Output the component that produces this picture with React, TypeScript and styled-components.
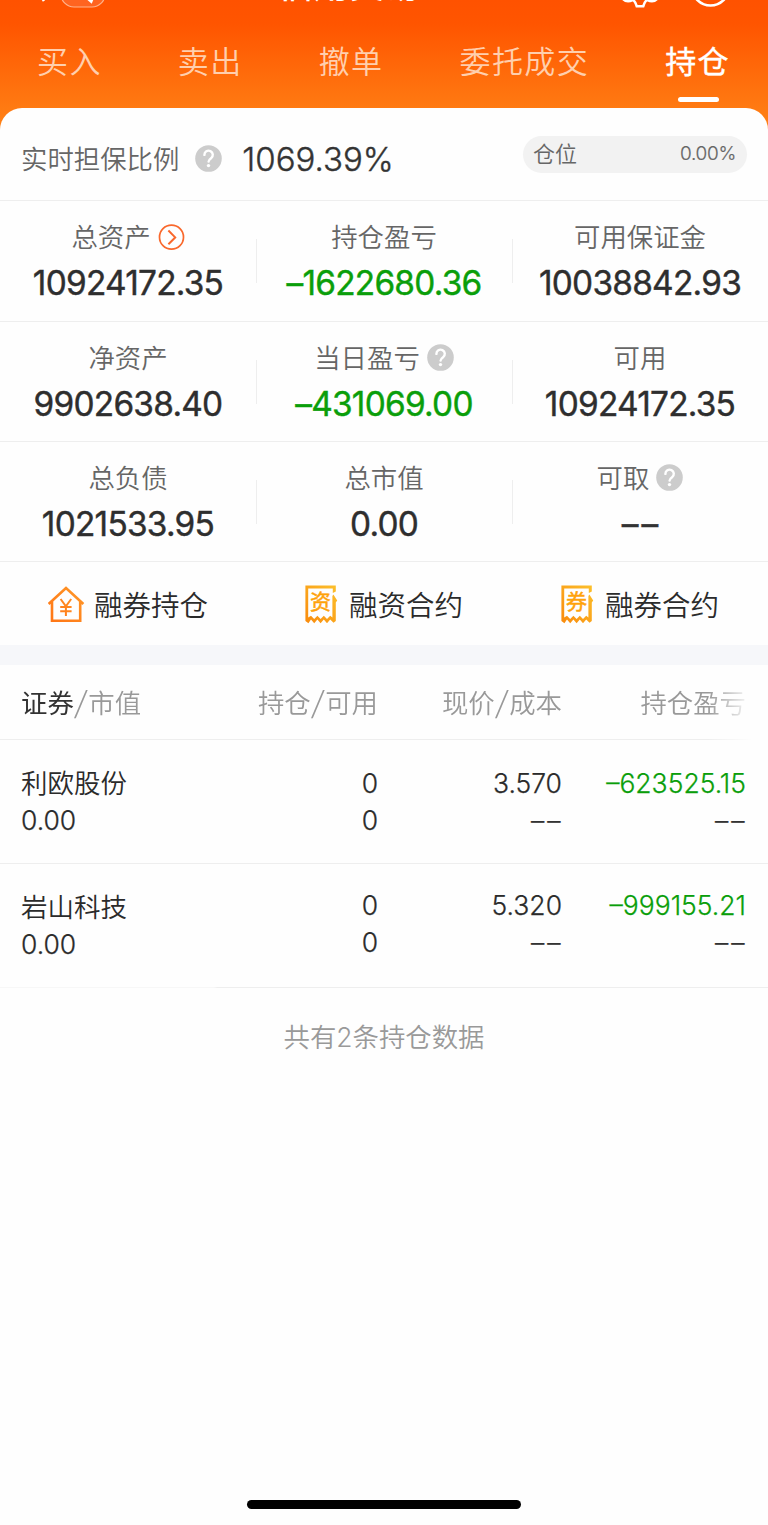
import React from 'react';
import styled, { createGlobalStyle } from 'styled-components';

const GlobalStyle = createGlobalStyle`
  * { box-sizing: border-box; }
  body {
    margin: 0;
    background: #fefefe;
    font-family: Inter, 'Noto Sans CJK SC', sans-serif;
    color: #333;
    -webkit-font-smoothing: antialiased;
  }
`;

const Screen = styled.div`
  width: 768px;
  height: 1525px;
  display: flex;
  flex-direction: column;
  overflow: hidden;
  background: #fefefe;
`;

const Header = styled.header`
  height: 130px;
  flex: none;
  background: linear-gradient(180deg, #ff5200 0, #ff5500 24px, #ff7a12 108px, #ff8316 130px);
`;

const TitleBar = styled.div`
  height: 20px;
  overflow: hidden;
  display: flex;
  align-items: flex-start;
`;

const BackIcon = styled.svg`
  width: 110px;
  height: 12px;
  flex: none;
`;

const Title = styled.h1`
  flex: none;
  width: 150px;
  margin: -34px 0 0 168px;
  font-size: 35.5px;
  line-height: 40px;
  font-weight: 500;
  color: #fff;
  white-space: nowrap;
`;

const ToolIcons = styled.svg`
  flex: none;
  width: 120px;
  height: 12px;
  margin-left: 187px;
`;

const Tabs = styled.nav`
  height: 88px;
  display: flex;
  justify-content: space-between;
  padding: 22px 38px 0 37px;
`;

const Tab = styled.div<{ $active?: boolean }>`
  display: flex;
  flex-direction: column;
  align-items: center;
  font-size: 31px;
  line-height: 40px;
  letter-spacing: 1.4px;
  font-weight: ${p => (p.$active ? 400 : 350)};
  color: ${p => (p.$active ? '#fff' : '#ffcfae')};
  -webkit-text-stroke: ${p => (p.$active ? '0.4px #fff' : '0')};
`;

const Underline = styled.i`
  width: 41px;
  height: 5px;
  margin: 15px 0 0 1px;
  border-radius: 3px;
  background: #fff;
`;

const Panel = styled.main`
  flex: 1;
  margin-top: -22px;
  display: flex;
  flex-direction: column;
  background: #fefefe;
  border-radius: 22px 22px 0 0;
`;

const RatioRow = styled.section`
  height: 93px;
  display: flex;
  align-items: center;
  padding: 10px 21px 0;
  border-bottom: 1px solid #eee;
`;

const Label = styled.span`
  font-size: 26.4px;
  line-height: 36px;
  font-weight: 350;
  color: #666;
  white-space: nowrap;
`;

const RatioValue = styled.span`
  margin-left: 20px;
  font-size: 33px;
  line-height: 40px;
  font-weight: 300;
  -webkit-text-stroke: 0.4px #333;
  letter-spacing: 0;
`;

const Pill = styled.div`
  width: 224px;
  height: 37px;
  margin: -10px 0 0 auto;
  padding: 0 11px 3px 10px;
  display: flex;
  align-items: center;
  justify-content: space-between;
  border-radius: 19px;
  background: #f2f2f2;
  font-size: 22px;
  font-weight: 350;
  color: #666;
`;

const PillLabel = styled.span`
  margin-top: -2px;
`;

const PillValue = styled.span`
  font-size: 19px;
  font-weight: 300;
  letter-spacing: -0.3px;
  margin-top: 1px;
  -webkit-text-stroke: 0.2px #666;
`;

const MetricRow = styled.section<{ $tall?: boolean }>`
  height: ${p => (p.$tall ? 121 : 120)}px;
  flex: none;
  display: grid;
  grid-template-columns: repeat(3, 256px);
  border-bottom: 1px solid #eee;
`;

const Metric = styled.div`
  display: flex;
  flex-direction: column;
  align-items: center;
  padding-top: 18px;
`;

const MetricHead = styled.div`
  height: 36px;
  display: flex;
  align-items: center;
  gap: 7px;
`;

const MetricValue = styled.div<{ $down?: boolean }>`
  margin-top: 8px;
  font-size: 33.4px;
  line-height: 40px;
  font-weight: 400;
  letter-spacing: -0.75px;
  color: ${p => (p.$down ? '#0a9e0a' : '#2e2e2e')};
  -webkit-text-stroke: 0.4px currentColor;
`;

const Divided = styled(Metric)`
  background: linear-gradient(#eee, #eee) 0 38px / 1px 44px no-repeat;
`;

const Links = styled.section`
  height: 83px;
  flex: none;
  display: grid;
  grid-template-columns: repeat(3, 256px);
`;

const LinkItem = styled.div<{ $gap: number }>`
  display: flex;
  align-items: center;
  justify-content: center;
  gap: ${p => p.$gap}px;
  padding-top: 1px;
  font-size: 28.5px;
  font-weight: 350;
  color: #2b2b2b;
`;

const LinkText = styled.span`
  margin-top: -2px;
`;

const Band = styled.div`
  height: 20px;
  flex: none;
  background: #f6f7fa;
`;

const TableHead = styled.div`
  height: 75px;
  flex: none;
  display: grid;
  grid-template-columns: 173px 184px 184px 184px;
  align-items: center;
  padding: 0 22px 2px 21px;
  font-size: 26.4px;
  font-weight: 350;
  color: #999;
  border-bottom: 1px solid #eee;
  mask-image: linear-gradient(90deg, #000 708px, transparent 752px);
`;

const Strong = styled.b`
  font-weight: 400;
  color: #333;
`;

const Slash = styled.span`
  display: inline-block;
  width: 14.5px;
  text-align: center;
  font-family: 'Noto Sans CJK SC', sans-serif;
  font-size: 29px;
  line-height: 30px;
  transform: skewX(-6deg);
`;

const Cell = styled.div<{ $right?: boolean; $down?: boolean; $raise?: number }>`
  display: flex;
  flex-direction: column;
  align-items: ${p => (p.$right ? 'flex-end' : 'flex-start')};
  margin-top: ${p => -(p.$raise ?? 0)}px;
  white-space: nowrap;
  color: ${p => (p.$down ? '#0a9e0a' : 'inherit')};
`;

const Num = styled.span`
  font-weight: 300;
  -webkit-text-stroke: 0.25px currentColor;
`;

const HeadCell = styled.div<{ $right?: boolean }>`
  text-align: ${p => (p.$right ? 'right' : 'left')};
  white-space: nowrap;
`;

const TableRow = styled.div<{ $last?: boolean }>`
  height: 124px;
  flex: none;
  display: grid;
  grid-template-columns: 173px 184px 184px 184px;
  padding: 25px 22px 0 21px;
  font-size: 26.5px;
  line-height: 37px;
  font-weight: 350;
  color: #2b2b2b;
  border-bottom: 1px solid #eee;
  border-image: ${p => (p.$last ? 'linear-gradient(90deg, #f7f7f7 214px, #eee 218px) 1' : 'none')};
`;

const Dashes = styled.span<{ $gap: number; $inset?: number }>`
  display: inline-block;
  color: #333;
  letter-spacing: ${p => p.$gap}px;
  margin-right: ${p => (p.$inset ?? 0) - p.$gap}px;
`;

const Summary = styled.p`
  margin: 29px 0 0;
  text-align: center;
  font-size: 26.4px;
  line-height: 40px;
  font-weight: 350;
  color: #999;
`;

const HomeBar = styled.div`
  width: 274px;
  height: 9px;
  margin: auto auto 16px;
  border-radius: 5px;
  background: #000;
`;

const HelpSvg = styled.svg<{ $gap?: number }>`
  width: 27px;
  height: 27px;
  flex: none;
  margin-top: -2px;
  margin-left: ${p => p.$gap ?? 0}px;
`;

const Help = ({ gap }: { gap?: number }) => (
  <HelpSvg viewBox="0 0 27 27" $gap={gap}>
    <circle cx="13.5" cy="13.5" r="13.3" fill="#ccc" />
    <path d="M9.4 9.9a4.2 4.2 0 1 1 6.7 3.3c-1.8 1.3-2.5 1.8-2.5 3.4" fill="none" stroke="#fff" strokeWidth="2.4" strokeLinecap="round" />
    <circle cx="13.5" cy="20.6" r="1.7" fill="#fff" />
  </HelpSvg>
);

const Arrow = () => (
  <svg width="27" height="27" viewBox="0 0 27 27" fill="none" stroke="#f9682c">
    <circle cx="13.5" cy="13.2" r="12" strokeWidth="1.7" />
    <path d="M10.4 6.5l6.8 6.9-6.8 6.9" strokeWidth="2" />
  </svg>
);

const House = () => (
  <svg width="37" height="37" viewBox="0 0 37 37" fill="none" stroke="url(#house)" strokeWidth="2.6">
    <defs>
      <linearGradient id="house" gradientUnits="userSpaceOnUse" x1="0" y1="37" x2="37" y2="0">
        <stop offset="0" stopColor="#ff7314" />
        <stop offset="1" stopColor="#ff9a2a" />
      </linearGradient>
    </defs>
    <path d="M0.6 18L18 2L35.4 18M4 15.5V34.8H32.2V15.5" />
    <path d="M12.6 13l5.3 7.4l5.3-7.4M17.9 20.4v9.6M12.2 20.9h11.4M12.2 25.3h11.4" strokeWidth="2" />
  </svg>
);

const TicketText = styled.text`
  font-size: 21px;
  font-weight: 400;
  fill: #ffa20a;
  stroke: #ffa20a;
  stroke-width: 0.5px;
`;

const Ticket = ({ mark }: { mark: string }) => (
  <svg width="33" height="39" viewBox="0 0 33 39" fill="none">
    <defs>
      <linearGradient id="ticket" x1="0" y1="1" x2="1" y2="0">
        <stop offset="0" stopColor="#f98a0c" />
        <stop offset="1" stopColor="#fcc12c" />
      </linearGradient>
    </defs>
    <path
      d="M0.4 0.6H30.8V6.4L27.8 8V3.4H3.2V32.6L6 30.8L9.2 34L12.4 30.8L15.6 34L18.8 30.8L22 34L25.2 30.8L27.4 32.6V11L28.4 9.6L32.2 15.4L30.8 17.6V36L28.5 37.8L25.2 34.6L22 38.3L18.8 34.6L15.6 38.3L12.4 34.6L9.2 38.3L6 34.6L3.4 38.3L0.4 36Z"
      fill="url(#ticket)"
    />
    <TicketText x="15.4" y="24.4" textAnchor="middle">{mark}</TicketText>
  </svg>
);

type MetricData = { label: string; value: string; down?: boolean; icon?: React.ReactNode };

const metrics: MetricData[][] = [
  [
    { label: '总资产', value: '10924172.35', icon: <Arrow /> },
    { label: '持仓盈亏', value: '–1622680.36', down: true },
    { label: '可用保证金', value: '10038842.93' },
  ],
  [
    { label: '净资产', value: '9902638.40' },
    { label: '当日盈亏', value: '–431069.00', down: true, icon: <Help /> },
    { label: '可用', value: '10924172.35' },
  ],
  [
    { label: '总负债', value: '1021533.95' },
    { label: '总市值', value: '0.00' },
    { label: '可取', value: '––', icon: <Help /> },
  ],
];

const holdings = [
  { name: '利欧股份', price: '3.570', pnl: '–623525.15', raise: 0.5 },
  { name: '岩山科技', price: '5.320', pnl: '–999155.21', raise: 2 },
];

export default function App() {
  return (
    <Screen>
      <GlobalStyle />
      <Header>
        <TitleBar>
          <BackIcon viewBox="0 0 110 12" fill="none">
            <path d="M41.5 -3L44 1" stroke="#fff" strokeWidth="2.6" />
            <path d="M61 -6a13 13 0 0 0 13 13h18a13 13 0 0 0 13-13" fill="#ff6420" stroke="#ffb38c" strokeWidth="1.2" />
            <path d="M86 -3l5.2 4.6 1.6-4" stroke="#fff" strokeWidth="2.6" />
          </BackIcon>
          <Title>信用交易</Title>
          <ToolIcons viewBox="0 0 120 12" fill="none" stroke="#fff" strokeWidth="2.6">
            <path d="M8 -1Q12 3 17.5 0Q20 0.5 21.8 6.3h6.4Q30 0.5 32.5 0Q38 3 42 -1" />
            <circle cx="95.5" cy="-13" r="18.5" />
          </ToolIcons>
        </TitleBar>
        <Tabs>
          <Tab>买入</Tab>
          <Tab>卖出</Tab>
          <Tab>撤单</Tab>
          <Tab>委托成交</Tab>
          <Tab $active>
            持仓
            <Underline />
          </Tab>
        </Tabs>
      </Header>
      <Panel>
        <RatioRow>
          <Label>实时担保比例</Label>
          <Help gap={16} />
          <RatioValue>1069.39%</RatioValue>
          <Pill>
            <PillLabel>仓位</PillLabel>
            <PillValue>0.00%</PillValue>
          </Pill>
        </RatioRow>
        {metrics.map((row, i) => (
          <MetricRow key={i} $tall={i === 0}>
            {row.map((m, j) => {
              const Box = j === 0 ? Metric : Divided;
              return (
                <Box key={m.label}>
                  <MetricHead>
                    <Label>{m.label}</Label>
                    {m.icon}
                  </MetricHead>
                  <MetricValue $down={m.down}>
                    {m.value === '––' ? <Dashes $gap={3}>––</Dashes> : m.value}
                  </MetricValue>
                </Box>
              );
            })}
          </MetricRow>
        ))}
        <Links>
          <LinkItem $gap={9}><House /><LinkText>融券持仓</LinkText></LinkItem>
          <LinkItem $gap={11}><Ticket mark="资" /><LinkText>融资合约</LinkText></LinkItem>
          <LinkItem $gap={11}><Ticket mark="券" /><LinkText>融券合约</LinkText></LinkItem>
        </Links>
        <Band />
        <TableHead>
          <HeadCell><Strong>证券</Strong><Slash>/</Slash>市值</HeadCell>
          <HeadCell $right>持仓<Slash>/</Slash>可用</HeadCell>
          <HeadCell $right>现价<Slash>/</Slash>成本</HeadCell>
          <HeadCell $right>持仓盈亏</HeadCell>
        </TableHead>
        {holdings.map((h, i) => (
          <TableRow key={h.name} $last={i === holdings.length - 1}>
            <Cell>{h.name}<Num>0.00</Num></Cell>
            <Cell $right $raise={h.raise}><Num>0</Num><Num>0</Num></Cell>
            <Cell $right $raise={h.raise}><Num>{h.price}</Num><Num><Dashes $gap={3} $inset={1.5}>––</Dashes></Num></Cell>
            <Cell $right $down $raise={h.raise}><Num>{h.pnl}</Num><Num><Dashes $gap={3} $inset={1.5}>––</Dashes></Num></Cell>
          </TableRow>
        ))}
        <Summary>共有2条持仓数据</Summary>
        <HomeBar />
      </Panel>
    </Screen>
  );
}
